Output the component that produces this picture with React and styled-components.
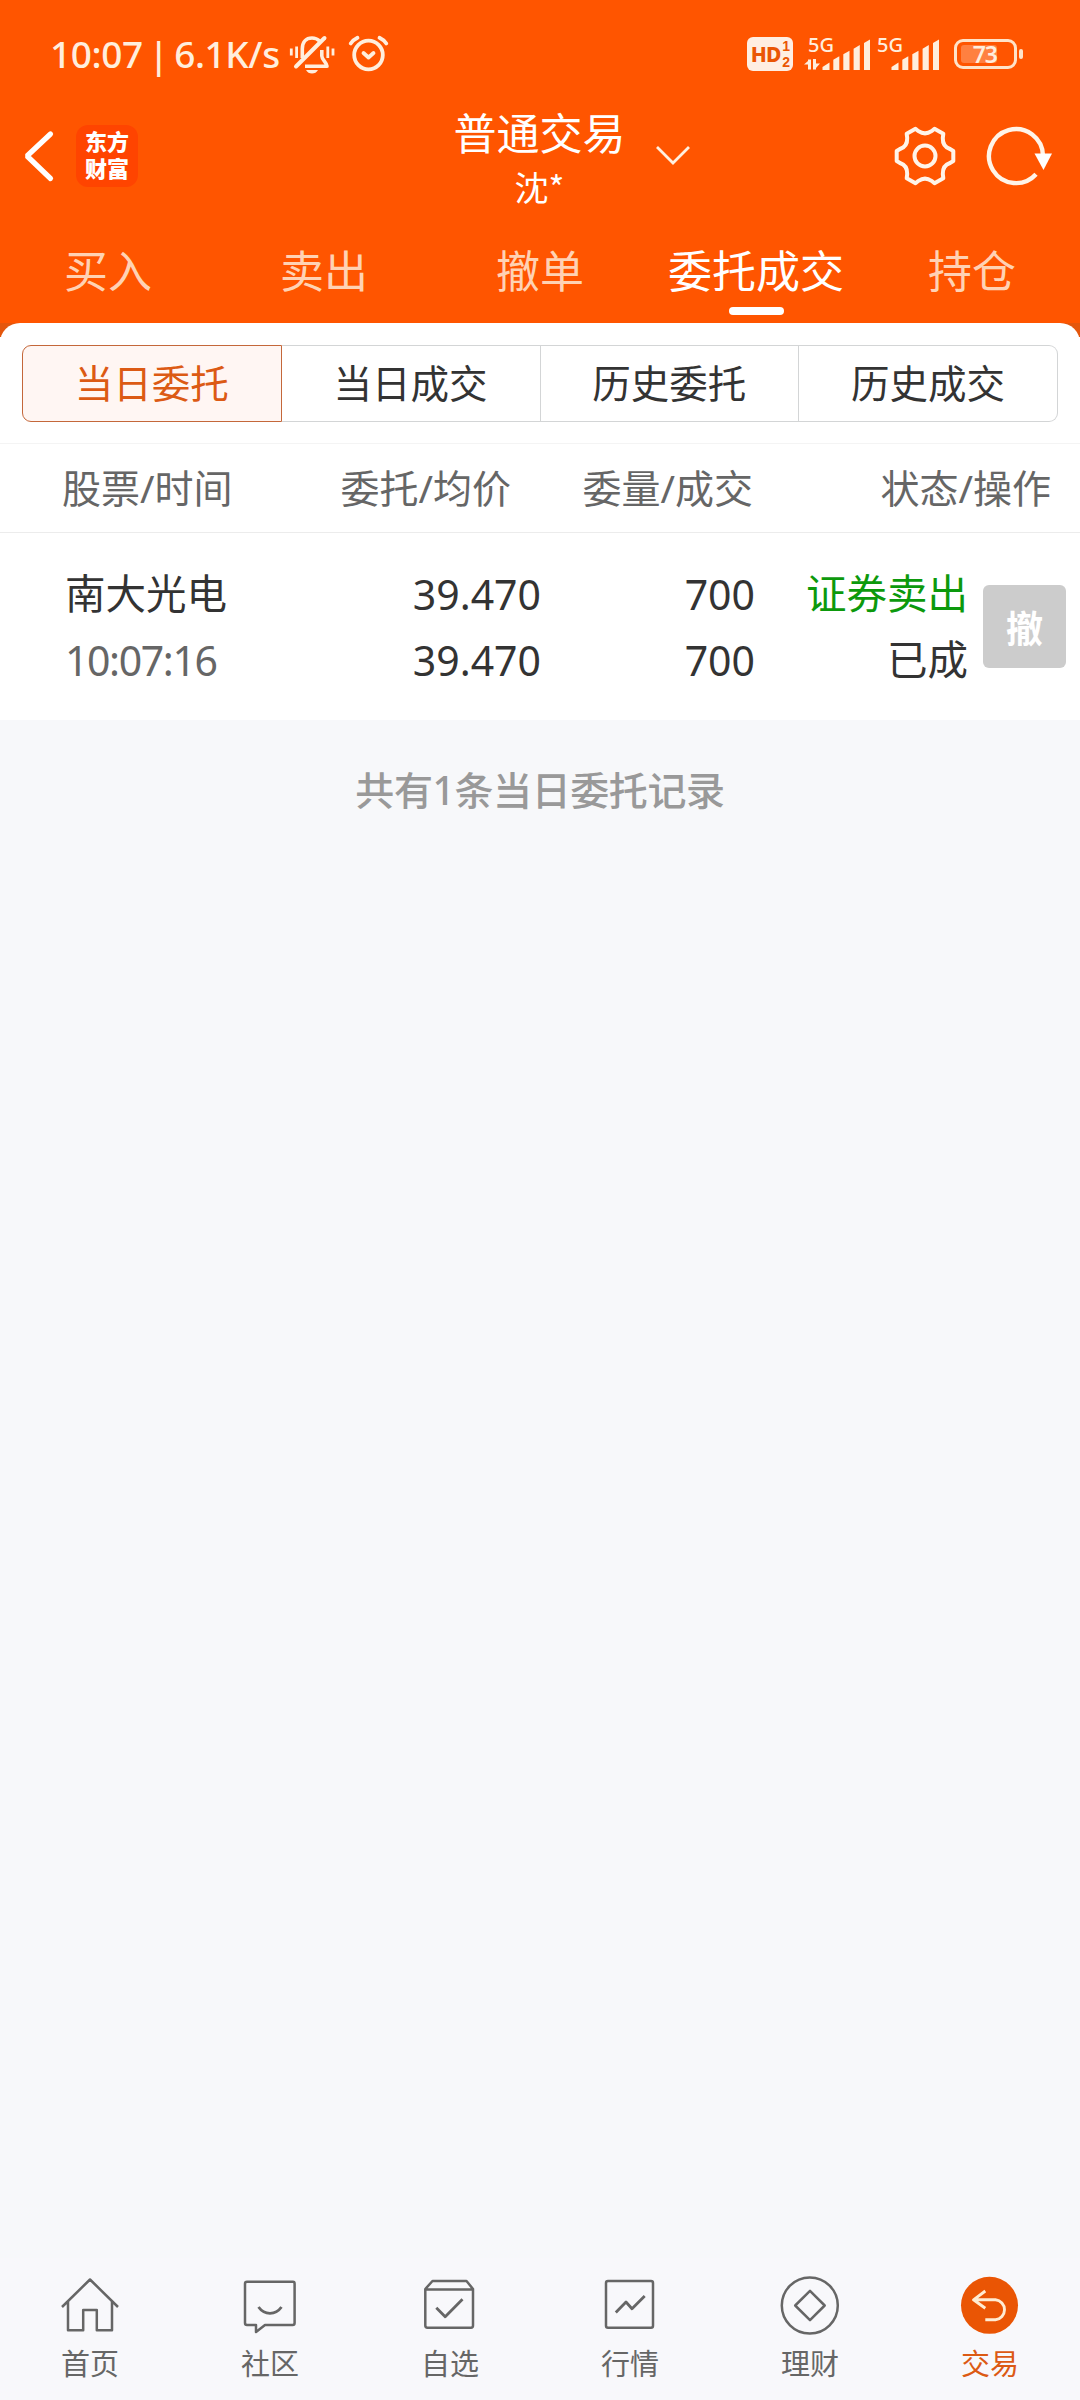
import React from 'react';
import styled, { createGlobalStyle } from 'styled-components';

const GlobalStyle = createGlobalStyle`
    * {
        box-sizing: border-box;
    }
    body {
        margin: 0;
        background-color: #f7f8fa;
        font-family: "Noto Sans", "Noto Sans CJK SC", sans-serif;
        color: #333;
    }
    svg {
        display: block;
        flex: none;
    }
`;

const Page = styled.div`
    display: flex;
    flex-direction: column;
    width: 1080px;
    height: 2400px;
    overflow: hidden;
`;

const Header = styled.header`
    background-color: #ff5500;
    color: #fff;
`;

const StatusBar = styled.div`
    display: flex;
    align-items: center;
    height: 102px;
    padding: 6px 57px 0 50px;
    color: #ffeedd;
`;

const StatusText = styled.span`
    width: 238px;
    font-size: 37px;
    font-weight: 500;
    line-height: 50px;
    letter-spacing: -0.4px;
    word-spacing: -3.5px;
    white-space: nowrap;
`;

const StatusIcons = styled.div`
    display: flex;
    align-items: center;
    gap: ${props => props.$gap || 0}px;
`;

const StatusRight = styled(StatusIcons)`
    margin-left: auto;
`;

const Signals = styled(StatusIcons)`
    padding: 0 14px 0 11px;
`;

const HdBadge = styled.div`
    display: flex;
    align-items: center;
    justify-content: center;
    width: 46px;
    height: 34px;
    border-radius: 6px;
    background-color: #ffeee2;
    color: #ea5504;
    font-size: 21px;
    font-weight: 800;
    letter-spacing: -1px;
`;

const HdDigits = styled.span`
    display: flex;
    flex-direction: column;
    margin-left: 2px;
    font-family: "Liberation Sans", sans-serif;
    font-size: 14px;
    font-weight: 700;
    line-height: 16px;
`;

const Battery = styled.div`
    display: flex;
    align-items: center;
    gap: 2px;

    &::after {
        content: "";
        width: 4px;
        height: 10px;
        border-radius: 2px;
        background-color: #ffe3c8;
    }
`;

const BatteryBody = styled.div`
    width: 63px;
    height: 30px;
    padding: 3px 4px;
    border: 3px solid #ffe3c8;
    border-radius: 9px;
`;

const BatteryLevel = styled.div`
    width: 36px;
    height: 18px;
    border-radius: 3px;
    background-color: #ff8040;
    font-size: 23px;
    font-weight: 600;
    line-height: 18px;
    letter-spacing: -1px;
    text-align: right;
`;

const TitleBar = styled.div`
    display: flex;
    align-items: center;
    height: 108px;
    padding-right: 26px;
`;

const TitleLeft = styled.div`
    display: flex;
    align-items: center;
    gap: 21px;
    width: 453px;
    padding-left: 21px;
`;

const Logo = styled.div`
    width: 62px;
    height: 62px;
    padding-top: 3px;
    border-radius: 12px;
    background-color: #ff4400;
    font-size: 22px;
    font-weight: 900;
    line-height: 27px;
    text-align: center;
`;

const Title = styled.div`
    width: 173px;
    padding-top: 1px;
    font-size: 43px;
    line-height: 60px;
    text-align: center;
    white-space: nowrap;
`;

const Account = styled.div`
    font-family: "Noto Sans CJK SC", sans-serif;
    font-size: 34px;
    line-height: 46px;
`;

const TitleToggle = styled.div`
    padding-left: 29px;
`;

const TitleActions = styled.div`
    display: flex;
    align-items: center;
    gap: 29px;
    margin-left: auto;
`;

const Tabs = styled.nav`
    display: grid;
    grid-template-columns: repeat(5, 1fr);
    height: 113px;
    padding-top: 29px;
`;

const Tab = styled.div`
    display: flex;
    flex-direction: column;
    align-items: center;
    gap: 4px;
    font-size: 44px;
    line-height: 64px;
    color: ${props => props.$active ? '#fff' : '#ffd2b4'};

    &::after {
        content: "";
        width: 55px;
        height: 8px;
        border-radius: 4px;
        background-color: ${props => props.$active ? '#fff' : 'transparent'};
    }
`;

const PanelBack = styled.div`
    background: linear-gradient(#e4560c 14px, #fff 14px);
`;

const Panel = styled.section`
    border-radius: 20px 20px 0 0;
    background-color: #fff;
    padding-top: 22px;
`;

const Segments = styled.div`
    display: flex;
    margin: 0 22px 21px;
`;

const Segment = styled.div`
    flex: 1;
    height: 77px;
    border: 1px solid ${props => props.$active ? '#c4673a' : '#d3d5d6'};
    border-left-width: ${props => props.$first ? 1 : 0}px;
    border-radius: ${props => props.$first ? '9px 0 0 9px' : props.$last ? '0 9px 9px 0' : 0};
    background-color: ${props => props.$active ? '#fff6f3' : '#fff'};
    color: ${props => props.$active ? '#dc5a14' : '#333'};
    font-size: 38.5px;
    line-height: 75px;
    text-align: center;
`;

const TableHead = styled.div`
    display: grid;
    grid-template-columns: 281px 230px 242px 298px;
    height: 90px;
    border-top: 1px solid #f4f4f4;
    border-bottom: 1px solid #ececec;
    font-size: 39px;
    line-height: 88px;
    color: #666;
`;

const HeadCell = styled.span`
    padding-left: ${props => props.$first ? 62 : 0}px;
    text-align: ${props => props.$first ? 'left' : 'right'};
`;

const OrderRow = styled.div`
    display: grid;
    grid-template-columns: 280px 261px 214px 213px 98px;
    align-items: center;
    height: 187px;
`;

const OrderCell = styled.div`
    display: flex;
    flex-direction: column;
    align-items: ${props => props.$first ? 'flex-start' : 'flex-end'};
    padding-left: ${props => props.$first ? 65 : 0}px;
    font-size: 41px;
    line-height: 66px;
`;

const StockName = styled.span`
    font-size: 40.5px;
`;

const Side = styled.span`
    font-size: 40.5px;
    color: #0c990c;
`;

const Status = styled.span`
    font-size: 40.5px;
`;

const Time = styled.span`
    color: #666;
    letter-spacing: -1.4px;
`;

const CancelButton = styled.button`
    width: 83px;
    height: 83px;
    margin-left: 15px;
    padding: 0;
    border: 0;
    border-radius: 6px;
    background-color: #ccc;
    color: #fff;
    font-family: inherit;
    font-size: 37px;
    font-weight: 700;
`;

const Summary = styled.p`
    flex: 1;
    margin: 0;
    padding-top: 40px;
    font-size: 39px;
    font-weight: 500;
    line-height: 60px;
    letter-spacing: -0.4px;
    color: #999;
    text-align: center;
`;

const BottomNav = styled.nav`
    display: grid;
    grid-template-columns: repeat(6, 1fr);
    height: 142px;
    padding-top: 17px;
    background-color: #f8f8fb;
`;

const NavItem = styled.div`
    display: flex;
    flex-direction: column;
    align-items: center;
    gap: 9px;
    font-size: 29px;
    line-height: 40px;
    color: ${props => props.$active ? '#dc5a14' : '#666'};
`;

const tabs = ['买入', '卖出', '撤单', '委托成交', '持仓'];
const segments = ['当日委托', '当日成交', '历史委托', '历史成交'];
const columns = ['股票/时间', '委托/均价', '委量/成交', '状态/操作'];

function MutedBell() {
    return (
        <svg width="48" height="40" viewBox="288 34 48 40" fill="none" stroke="currentColor" strokeWidth="3.6">
            <path d="M302.3 58V49C302.3 42 306 38 312 38C315 38 317.5 39 319.5 41" />
            <path d="M296 66.5L324.5 38" strokeWidth="4" strokeLinecap="round" />
            <path d="M321.8 50V56C322 60 326.5 62 327 66.2H305" strokeLinejoin="round" />
            <path d="M306 70H318Q316 73.5 312 73.5Q308 73.5 306 70Z" fill="currentColor" stroke="none" />
            <path d="M291.3 48.5V55.5M296.6 46.5V58M327.8 46.5V58M333 48.5V55.5" strokeWidth="2.8" />
        </svg>
    );
}

function AlarmClock() {
    return (
        <svg width="42" height="40" viewBox="347 34 42 40" fill="none" stroke="currentColor" strokeWidth="3.8" strokeLinecap="round">
            <circle cx="368.5" cy="55" r="14.3" />
            <path d="M363.5 53L368.5 57.5L373.5 53" strokeLinejoin="round" />
            <path d="M350.7 43.5Q353 40 357.5 37.8M379.5 37.8Q384 40 386.3 43.5" />
        </svg>
    );
}

function Signal({ data }) {
    return (
        <svg width="67" height="56" viewBox="0 -10 67 56" fill="currentColor">
            <text x="4" y="15.5" fontSize="20.5" fontWeight="500" textLength="26" lengthAdjust="spacingAndGlyphs">5G</text>
            {data && (
                <path d="M0 28.5L4 25V23.5H7V33.5H4V28.5ZM9 23H12V27.5H16L12 32V33.5H9Z" />
            )}
            <path d="M18.5 34V31L25.5 26.5V34Z" />
            <path d="M29.3 34V23.8L35.3 20.3V34Z" />
            <path d="M39.3 34V18.3L45.5 14.8V34Z" />
            <path d="M49.6 34V12.7L55.8 9V34Z" />
            <path d="M60 34V7L66 3.5V34Z" />
        </svg>
    );
}

function BackArrow() {
    return (
        <svg width="34" height="54" viewBox="0 0 34 54" fill="none" stroke="#fff" strokeWidth="5.2" strokeLinecap="round" strokeLinejoin="bevel">
            <path d="M29.5 5L6 27L29.5 49.5" />
        </svg>
    );
}

function ChevronDown() {
    return (
        <svg width="36" height="24" viewBox="0 0 36 24" fill="none" stroke="#fff0e0" strokeWidth="2.8">
            <path d="M2 3L18 19L34 3" />
        </svg>
    );
}

function Gear() {
    return (
        <svg width="64" height="64" viewBox="-32 -32 64 64" fill="none" stroke="#fff4e8" strokeWidth="4" strokeLinejoin="round">
            <path d="M-9.5 -27.2L-6.5 -24.8Q0 -20.5 6.5 -24.8L9.5 -27.2L18.3 -22.3L17.8 -18Q17.5 -9.5 25 -7L28.3 -5V5L25 7Q17.5 9.5 17.8 18L18.3 22.3L9.5 27.2L6.5 24.8Q0 20.5 -6.5 24.8L-9.5 27.2L-18.3 22.3L-17.8 18Q-17.5 9.5 -25 7L-28.3 5V-5L-25 -7Q-17.5 -9.5 -17.8 -18L-18.3 -22.3Z" />
            <circle r="10.5" />
        </svg>
    );
}

function Refresh() {
    return (
        <svg width="68" height="64" viewBox="-30 -32 68 64" fill="none" stroke="#fff4e8" strokeWidth="4.4">
            <path d="M27 0A27 27 0 1 0 20 18.2" />
            <path d="M18.5 -2.5H36L27.5 14Z" fill="#fff" stroke="none" />
        </svg>
    );
}

const navItems = [
    {
        label: '首页',
        icon: <path d="M2 32L30 4.5L58 32M8 26V55.3H23.2V35H36.8V55.3H52V26" />,
    },
    {
        label: '社区',
        icon: (
            <>
                <path d="M7 6.8H53Q54.6 6.8 54.6 8.8V48Q54.6 50 52.6 50H25L16 57V50H7Q5 50 5 48V8.8Q5 6.8 7 6.8Z" />
                <path d="M18.5 32Q23 38.3 30 38.3Q37 38.3 41.5 32" strokeWidth="2.8" />
            </>
        ),
    },
    {
        label: '自选',
        icon: (
            <>
                <path d="M12.5 6H46.5L53 14V50.5Q53 52.7 51 52.7H7.5Q5.3 52.7 5.3 50.5V14ZM5.3 14.5H53" />
                <path d="M16.3 32.8L25.2 41.8L42.5 24.3" strokeWidth="2.8" />
            </>
        ),
    },
    {
        label: '行情',
        icon: (
            <>
                <rect x="6" y="6" width="47" height="46.7" rx="2" />
                <path d="M15.8 37.5L26 27L32 33.7L44.7 21" strokeWidth="2.8" />
            </>
        ),
    },
    {
        label: '理财',
        icon: (
            <>
                <circle cx="29.8" cy="30.5" r="28" />
                <path d="M30 15.8L44.7 30.5L30 45.2L15.2 30.5Z" />
            </>
        ),
    },
    {
        label: '交易',
        active: true,
        icon: (
            <>
                <circle cx="29.5" cy="30.3" r="28.5" fill="#ea5504" stroke="none" />
                <path d="M25.3 16L13.5 24.8L25.3 33.3M13.5 24.8H35.5A10 10 0 0 1 35.5 44.7H25.3" stroke="#ffecd2" strokeWidth="2.9" />
            </>
        ),
    },
];

function App() {
    return (
        <Page>
            <GlobalStyle />
            <Header>
                <StatusBar>
                    <StatusText>10:07 | 6.1K/s</StatusText>
                    <StatusIcons $gap={11}>
                        <MutedBell />
                        <AlarmClock />
                    </StatusIcons>
                    <StatusRight>
                        <HdBadge>HD<HdDigits><span>1</span><span>2</span></HdDigits></HdBadge>
                        <Signals $gap={2}>
                            <Signal data />
                            <Signal />
                        </Signals>
                        <Battery>
                            <BatteryBody><BatteryLevel>73</BatteryLevel></BatteryBody>
                        </Battery>
                    </StatusRight>
                </StatusBar>
                <TitleBar>
                    <TitleLeft>
                        <BackArrow />
                        <Logo>东方<br />财富</Logo>
                    </TitleLeft>
                    <Title>
                        普通交易
                        <Account>沈*</Account>
                    </Title>
                    <TitleToggle>
                        <ChevronDown />
                    </TitleToggle>
                    <TitleActions>
                        <Gear />
                        <Refresh />
                    </TitleActions>
                </TitleBar>
                <Tabs>
                    {tabs.map(tab => (
                        <Tab key={tab} $active={tab === '委托成交'}>{tab}</Tab>
                    ))}
                </Tabs>
            </Header>

            <PanelBack>
                <Panel>
                    <Segments>
                        {segments.map((segment, i) => (
                            <Segment key={segment} $active={i === 0} $first={i === 0} $last={i === segments.length - 1}>
                                {segment}
                            </Segment>
                        ))}
                    </Segments>
                    <TableHead>
                        {columns.map((column, i) => (
                            <HeadCell key={column} $first={i === 0}>{column}</HeadCell>
                        ))}
                    </TableHead>
                    <OrderRow>
                        <OrderCell $first>
                            <StockName>南大光电</StockName>
                            <Time>10:07:16</Time>
                        </OrderCell>
                        <OrderCell>
                            <span>39.470</span>
                            <span>39.470</span>
                        </OrderCell>
                        <OrderCell>
                            <span>700</span>
                            <span>700</span>
                        </OrderCell>
                        <OrderCell>
                            <Side>证券卖出</Side>
                            <Status>已成</Status>
                        </OrderCell>
                        <CancelButton>撤</CancelButton>
                    </OrderRow>
                </Panel>
            </PanelBack>

            <Summary>共有1条当日委托记录</Summary>

            <BottomNav>
                {navItems.map(item => (
                    <NavItem key={item.label} $active={item.active}>
                        <svg width="60" height="60" viewBox="0 0 60 60" fill="none" stroke="#666" strokeWidth="2.5" strokeLinejoin="round">
                            {item.icon}
                        </svg>
                        {item.label}
                    </NavItem>
                ))}
            </BottomNav>
        </Page>
    );
}

export default App;
